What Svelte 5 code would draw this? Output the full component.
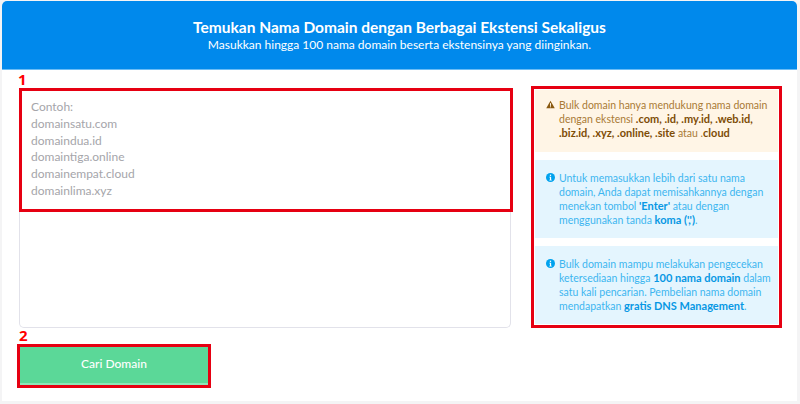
<script>
    let placeholder = ['Contoh:', 'domainsatu.com', 'domaindua.id', 'domaintiga.online', 'domainempat.cloud', 'domainlima.xyz'];
</script>

<div class="card">
    <header>
        <h1>Temukan Nama Domain dengan Berbagai Ekstensi Sekaligus</h1>
        <p>Masukkan hingga 100 nama domain beserta ekstensinya yang diinginkan.</p>
    </header>

    <div class="body">
        <div class="left">
            <div class="field">
                <div class="lines">
                    {#each placeholder as line}
                        <div>{line}</div>
                    {/each}
                </div>
                <span class="mark mark-field"></span>
                <span class="num num-1">1</span>
            </div>
            <div class="btn-wrap">
                <button>Cari Domain</button>
                <span class="mark mark-btn"></span>
                <span class="num num-2">2</span>
            </div>
        </div>

        <div class="right">
            <div class="alert warn">
                <svg viewBox="0 0 16 16" class="icon"><path d="M8 1.2 15.6 14.6H.4Z" fill="#8a5a12"/><rect x="7.1" y="5.6" width="1.8" height="4.8" fill="#fff5e6"/><rect x="7.1" y="11.2" width="1.8" height="1.8" fill="#fff5e6"/></svg>
                <p>Bulk domain hanya mendukung nama domain dengan ekstensi <b>.com, .id, .my.id, .web.id, .biz.id, .xyz, .online, .site</b> atau .<b>cloud</b></p>
            </div>
            <div class="alert info">
                <svg viewBox="0 0 16 16" class="icon"><circle cx="8" cy="8" r="8" fill="#00a2ee"/><rect x="6.9" y="3" width="2.2" height="2.2" fill="#fff"/><path d="M6 6.6h3.1v5.2H10.2v1.4H5.9v-1.4H7V8H6Z" fill="#fff"/></svg>
                <p>Untuk memasukkan lebih dari satu nama domain, Anda dapat memisahkannya dengan menekan tombol <b>'Enter'</b> atau dengan menggunakan tanda <b>koma (',')</b>.</p>
            </div>
            <div class="alert info">
                <svg viewBox="0 0 16 16" class="icon"><circle cx="8" cy="8" r="8" fill="#00a2ee"/><rect x="6.9" y="3" width="2.2" height="2.2" fill="#fff"/><path d="M6 6.6h3.1v5.2H10.2v1.4H5.9v-1.4H7V8H6Z" fill="#fff"/></svg>
                <p>Bulk domain mampu melakukan pengecekan ketersediaan hingga <b>100 nama domain</b> dalam satu kali pencarian. Pembelian nama domain mendapatkan <b>gratis DNS Management</b>.</p>
            </div>
            <span class="mark mark-right"></span>
        </div>
    </div>
</div>

<style>
    :global(body) {
        background: #f4f4f5;
        font-family: Lato, "Open Sans", sans-serif;
    }
    .card {
        width: 795px;
        height: 400px;
        margin: 1px 0 0 2px;
        background: #fff;
        border-radius: 5px 5px 0 0;
        box-sizing: border-box;
    }
    header {
        height: 69px;
        background: #0089ec;
        border-bottom: 1px solid #6bbcf5;
        border-radius: 5px 5px 0 0;
        color: #fff;
        text-align: center;
        box-sizing: border-box;
        padding-top: 17px;
    }
    h1 {
        margin: 0;
        font-size: 15.5px;
        line-height: 18px;
        font-weight: 700;
    }
    header p {
        margin: 0;
        font-size: 12px;
        line-height: 18px;
    }
    .body {
        display: flex;
        padding-top: 20px;
    }
    .left {
        width: 492px;
        margin-left: 17px;
    }
    .field {
        position: relative;
        height: 238px;
        border: 1px solid #e2e2ea;
        border-top: none;
        border-radius: 0 0 5px 5px;
        box-sizing: border-box;
    }
    .lines {
        padding: 9px 0 0 11px;
        font-size: 12px;
        line-height: 16.8px;
        color: #a5a5aa;
    }
    .mark {
        position: absolute;
        border: 3px solid #e60012;
        box-sizing: border-box;
        pointer-events: none;
    }
    .mark-field {
        left: -1px;
        top: -2px;
        width: 494px;
        height: 124px;
    }
    .num {
        position: absolute;
        color: #f00;
        font: 700 15px/16px "Open Sans", sans-serif;
    }
    .num-1 {
        left: -2px;
        top: -19px;
    }
    .btn-wrap {
        position: relative;
        margin: 19px 0 0 1px;
        width: 188px;
        height: 38px;
    }
    button {
        display: block;
        width: 100%;
        height: 100%;
        border: none;
        border-bottom: 2px solid #8ee6b8;
        background: #5bd898;
        color: #fff;
        font: 500 12px Lato, sans-serif;
        padding: 0 0 3px;
    }
    .mark-btn {
        left: -3px;
        top: -3px;
        width: 194px;
        height: 44px;
    }
    .num-2 {
        left: -1px;
        top: -20px;
    }
    .right {
        position: relative;
        width: 243px;
        margin-left: 24px;
        display: flex;
        flex-direction: column;
        gap: 8px;
    }
    .alert {
        display: flex;
        gap: 4px;
        padding: 8px 3px 0 11px;
        font-size: 10.5px;
        line-height: 14px;
        box-sizing: border-box;
    }
    .alert p {
        margin: 0;
    }
    .alert b {
        font-size: 11px;
    }
    .warn {
        height: 62px;
        background: #fff5e6;
        color: #a97a35;
    }
    .warn b {
        color: #7d4c05;
    }
    .info {
        height: 78px;
        padding-top: 11px;
        background: #e4f5fe;
        color: #3db5f0;
    }
    .info b {
        color: #0798e4;
    }
    .icon {
        flex: none;
        width: 9px;
        height: 9px;
        margin-top: 2px;
    }
    .mark-right {
        left: -4px;
        top: -4px;
        width: 251px;
        height: 242px;
    }
</style>
